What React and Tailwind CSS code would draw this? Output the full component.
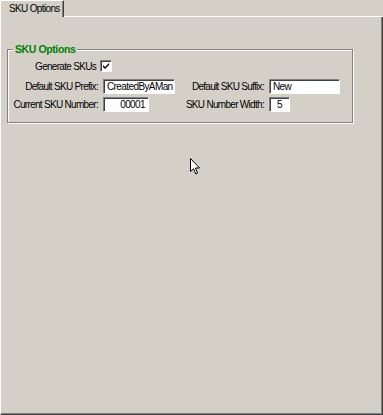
import React from "react";

const font = { fontFamily: '"Liberation Sans", Arial, sans-serif' };

function Field({ value, width, align = "text-left" }) {
  return (
    <div
      className={`h-[15px] overflow-hidden whitespace-nowrap bg-white border border-t-[#808080] border-l-[#808080] border-r-white border-b-white shadow-[inset_1px_1px_0_#404040] text-[10px] tracking-[-0.6px] leading-[13px] text-black px-[3px] ${align}`}
      style={{ width }}
    >
      {value}
    </div>
  );
}

function CheckBox() {
  return (
    <div className="w-[12px] h-[12px] bg-white border border-t-[#808080] border-l-[#808080] border-r-white border-b-white shadow-[inset_1px_1px_0_#404040] flex items-center justify-center">
      <svg width="8" height="8" viewBox="0 0 8 8">
        <path d="M1 3 L3 5 L7 1 L7 3 L3 7 L1 5 Z" fill="#000" />
      </svg>
    </div>
  );
}

export default function App() {
  return (
    <div className="w-[383px] h-[415px] bg-[#d4d0c8] flex flex-col relative text-black whitespace-nowrap" style={font}>
      {/* tab strip */}
      <div className="flex h-[17px]">
        <div className="w-[64px] h-[17px] border-t border-l border-white border-r border-r-[#404040] shadow-[inset_-1px_0_0_#808080] text-[10px] tracking-[-0.65px] leading-[15px] pl-[8px]">
          SKU Options
        </div>
        <div className="flex-1 border-b border-white" />
      </div>

      {/* panel */}
      <div className="flex-1 border-l border-white border-r border-b border-r-[#404040] border-b-[#404040] shadow-[inset_-1px_-1px_0_#808080] pl-[6px] pt-[32px]">
        <div className="relative w-[346px] h-[74px] border border-[#808080] shadow-[inset_1px_1px_0_#fff,1px_1px_0_#fff] flex flex-col text-[10px] tracking-[-0.7px]">
          <span className="absolute left-[5px] top-[-7px] px-[2px] bg-[#d4d0c8] text-[10.5px] tracking-[-0.4px] leading-[12px] font-bold text-[#008000]">
            SKU Options
          </span>

          <div className="flex items-center mt-[10px] h-[12px]">
            <span className="w-[88px] text-right">Generate SKUs</span>
            <span className="ml-[4px]">
              <CheckBox />
            </span>
          </div>

          <div className="flex items-center mt-[7px]">
            <span className="w-[90px] text-right">Default SKU Prefix:</span>
            <span className="ml-[5px]">
              <Field value="CreatedByAMan" width={72} />
            </span>
            <span className="w-[89px] text-right">Default SKU Suffix:</span>
            <span className="ml-[5px]">
              <Field value="New" width={71} />
            </span>
          </div>

          <div className="flex items-center mt-[3px]">
            <span className="w-[90px] text-right">Current SKU Number:</span>
            <span className="ml-[5px]">
              <Field value="00001" width={46} align="text-right" />
            </span>
            <span className="w-[115px] text-right">SKU Number Width:</span>
            <span className="ml-[5px]">
              <Field value="5" width={21} align="text-center" />
            </span>
          </div>
        </div>
      </div>

      {/* mouse pointer */}
      <svg className="absolute left-[190px] top-[158px]" width="11" height="17" viewBox="0 0 11 17">
        <path d="M0.5 0.5 L0.5 13.5 L3.5 10.8 L5.8 16 L7.6 15.1 L5.4 10 L9.5 10 Z" fill="#fff" stroke="#000" strokeWidth="1" />
      </svg>
    </div>
  );
}
